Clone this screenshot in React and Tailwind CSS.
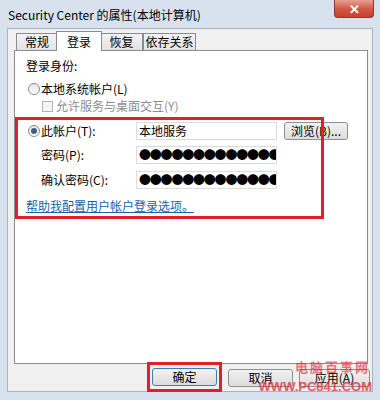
import React from "react"

const font = { fontFamily: '"Noto Sans CJK SC", "Liberation Sans", sans-serif' }

const Radio = ({ checked }) => (
  <span className="w-[12px] h-[12px] rounded-full border border-[#8a8a8a] bg-gradient-to-b from-[#e6e6e6] to-[#ffffff] flex items-center justify-center mr-[1px]">
    { checked ? <span className="w-[6px] h-[6px] rounded-full bg-[#3c5f8c]"/> : null }
  </span>
)

const Field = ({ children }) => (
  <div className="w-[141px] h-[18px] border border-[#dcdcdc] bg-white flex items-center px-[2px] overflow-hidden">
    { children }
  </div>
)

const Dots = () => (
  <span className="text-[12px] leading-none tracking-[-1.2px] text-black whitespace-nowrap">
    { "●●●●●●●●●●●●●●" }
  </span>
)

const Button = ({ children, className = "" }) => (
  <div className={ `h-[18px] border border-[#8e8f8f] rounded-[3px] bg-gradient-to-b from-[#f2f2f2] to-[#dcdcdc] flex items-center justify-center text-[12px] text-black ${className}` }>
    { children }
  </div>
)

const tabs = [
  { label: "常规", w: "w-[42px]" },
  { label: "登录", w: "w-[46px]", active: true },
  { label: "恢复", w: "w-[43px]" },
  { label: "依存关系", w: "w-[53px]" }
]

const App = () => {
  return (
    <div className="w-[380px] h-[400px] bg-[#d7e2ee] flex flex-col relative overflow-hidden" style={ font }>

      {/* title bar */}
      <div className="h-[28px] flex items-start justify-between">
        <span className="text-[12px] text-black pl-[8px] pt-[6px]">Security Center 的属性(本地计算机)</span>
        <div className="w-[40px] h-[18px] mr-[6px] rounded-b-[4px] bg-gradient-to-b from-[#e8a194] via-[#d25a44] to-[#c6402a] border border-[#8a3a2e] border-t-0 flex items-center justify-center">
          <span className="text-white text-[13px] font-bold leading-none">✕</span>
        </div>
      </div>

      {/* client */}
      <div className="flex-1 mx-[7px] mb-[8px] bg-[#f0f0f0] border border-[#a9b4c2] flex flex-col">

        {/* tabs */}
        <div className="flex items-end h-[22px] pl-[8px]">
          { tabs.map(t => (
            <div key={ t.label }
              className={ t.active
                ? `${t.w} h-[20px] -mx-[2px] bg-white border border-[#898c95] border-b-0 text-[12px] flex items-center justify-center relative z-10`
                : `${t.w} h-[18px] bg-gradient-to-b from-[#f3f3f3] to-[#e3e3e3] border border-[#898c95] text-[12px] flex items-center justify-center` }
            >
              { t.label }
            </div>
          )) }
        </div>

        {/* panel */}
        <div className="relative ml-[6px] mr-[4px] -mt-[1px] flex-1 bg-white border border-[#898c95] flex flex-col pl-[11px] pt-[7px] text-[12px] text-black">
          <div className="h-[16px] flex items-center">登录身份:</div>

          <div className="h-[16px] mt-[7px] flex items-center pl-[2px]">
            <Radio/>
            <span>本地系统帐户(L)</span>
          </div>
          <div className="h-[16px] mt-[1px] flex items-center pl-[16px] text-[#8d8d8d]">
            <span className="w-[11px] h-[11px] border border-[#b4b4b4] bg-[#f4f4f4] mr-[3px]"/>
            <span>允许服务与桌面交互(Y)</span>
          </div>

          <div className="flex items-center h-[20px] mt-[7px]">
            <div className="w-[110px] flex items-center pl-[2px]">
              <Radio checked/>
              <span>此帐户(T):</span>
            </div>
            <Field><span className="text-[12px]">本地服务</span></Field>
            <Button className="w-[64px] ml-[7px]">浏览(B)...</Button>
          </div>
          <div className="flex items-center h-[20px] mt-[4px]">
            <span className="w-[110px] pl-[15px]">密码(P):</span>
            <Field><Dots/></Field>
          </div>
          <div className="flex items-center h-[20px] mt-[5px]">
            <span className="w-[110px] pl-[15px]">确认密码(C):</span>
            <Field><Dots/></Field>
          </div>
          <div className="mt-[8px] text-[#1a5fa8] underline h-[16px] leading-[16px]">帮助我配置用户帐户登录选项。</div>

          {/* red annotation box */}
          <div className="absolute left-0 top-[66px] w-[309px] h-[102px] border-[3px] border-[#e0202a] pointer-events-none"/>
        </div>

        {/* buttons */}
        <div className="h-[27px] flex items-center justify-end pr-[2px] gap-[6px] relative">
          <div className="border-[3px] border-[#e0202a] px-[2px] py-[3px] -mt-[1px]">
            <Button className="w-[65px] !border-[#3c7fb1] from-[#eaf6fd] to-[#bee6fd]">确定</Button>
          </div>
          <Button className="w-[65px]">取消</Button>
          <Button className="w-[71px]">应用(A)</Button>
          <div className="absolute right-[2px] -top-[4px] text-[13px] font-bold text-[#e0202a] opacity-60 leading-none tracking-[2px]">
            电脑百事网
          </div>
          <div className="absolute right-[0px] -bottom-[2px] text-[13px] font-bold text-[#e0202a] opacity-70 leading-none" style={ { fontFamily: '"Liberation Sans", sans-serif' } }>
            WWW.PC841.COM
          </div>
        </div>
      </div>
    </div>
  )
}

export default App
